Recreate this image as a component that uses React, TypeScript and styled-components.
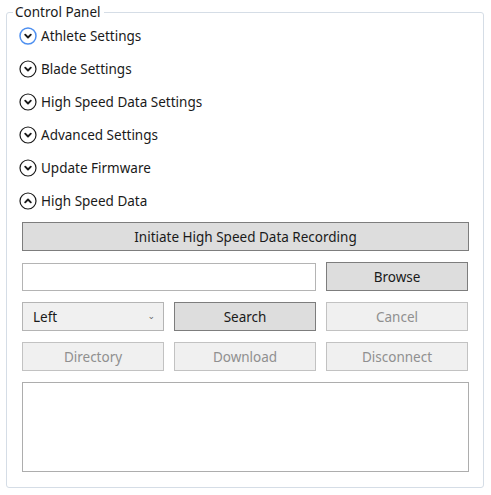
import React from "react";
import styled, { createGlobalStyle } from "styled-components";

const Global = createGlobalStyle`
  html, body { margin: 0; padding: 0; background: #ffffff; }
  body { font-family: "Noto Sans", "DejaVu Sans", sans-serif; color: #1a1a1a; }
`;

const Page = styled.div`
  width: 491px;
  height: 495px;
  box-sizing: border-box;
  padding: 4px 7px 0 6px;
`;

const Fieldset = styled.fieldset`
  margin: 0;
  box-sizing: border-box;
  height: 484px;
  border: 1px solid #d5dde6;
  border-radius: 3px;
  padding: 0 14px 0 12px;
  display: flex;
  flex-direction: column;
`;

const Legend = styled.legend`
  font-size: 13.5px;
  line-height: 16px;
  padding: 0 3px 0 2px;
  margin-left: -6px;
`;

const Section = styled.div`
  height: 33px;
  display: flex;
  align-items: center;
  gap: 4px;
  font-size: 13.5px;
  &:first-of-type { margin-top: -1px; }
`;

const IconWrap = styled.span`
  width: 18px;
  height: 18px;
  display: inline-flex;
  align-items: center;
  justify-content: center;
`;

const Body = styled.div`
  display: flex;
  flex-direction: column;
  gap: 11px;
  padding-left: 3px;
  margin-top: 5px;
`;

const Grid = styled.div`
  display: grid;
  grid-template-columns: 142px 142px 142px;
  column-gap: 10px;
  row-gap: 11px;
`;

const Button = styled.button<{ $disabled?: boolean }>`
  height: 29px;
  box-sizing: border-box;
  border: 1px solid ${(p) => (p.$disabled ? "#c2c2c2" : "#7d7d7d")};
  background: ${(p) => (p.$disabled ? "#f0f0f0" : "#dddddd")};
  color: ${(p) => (p.$disabled ? "#8f8f8f" : "#1a1a1a")};
  font-family: inherit;
  font-size: 13.5px;
  padding: 0;
  margin: 0;
  border-radius: 0;
`;

const WideButton = styled(Button)`
  width: 100%;
`;

const TextInput = styled.div`
  grid-column: span 2;
  height: 28px;
  margin-top: 1px;
  box-sizing: border-box;
  border: 1px solid #b4b4b4;
  background: #ffffff;
`;

const Combo = styled.div`
  height: 29px;
  box-sizing: border-box;
  border: 1px solid #b4b4b4;
  background: #f0f0f0;
  display: flex;
  align-items: center;
  justify-content: space-between;
  padding: 0 8px 0 10px;
  font-size: 13.5px;
`;

const Caret = styled.span`
  font-size: 9px;
  color: #666;
  margin-top: -2px;
`;

const TextArea = styled.div`
  height: 90px;
  box-sizing: border-box;
  border: 1px solid #adadad;
  background: #ffffff;
`;

const Chevron = ({ up, focus }: { up?: boolean; focus?: boolean }) => (
  <svg width="18" height="18" viewBox="0 0 18 18">
    <circle
      cx="9"
      cy="9"
      r="8"
      fill="none"
      stroke={focus ? "#4d8ff0" : "#1a1a1a"}
      strokeWidth={focus ? 1.5 : 1.2}
    />
    <path
      d={up ? "M6.2 10.3 L9 7.5 L11.8 10.3" : "M6.2 7.7 L9 10.5 L11.8 7.7"}
      fill="none"
      stroke="#1a1a1a"
      strokeWidth="1.9"
      strokeLinecap="round"
      strokeLinejoin="round"
    />
  </svg>
);

const sections = [
  "Athlete Settings",
  "Blade Settings",
  "High Speed Data Settings",
  "Advanced Settings",
  "Update Firmware",
];

export default function App() {
  return (
    <Page>
      <Global />
      <Fieldset>
        <Legend>Control Panel</Legend>
        {sections.map((s, i) => (
          <Section key={s}>
            <IconWrap>
              <Chevron focus={i === 0} />
            </IconWrap>
            {s}
          </Section>
        ))}
        <Section>
          <IconWrap>
            <Chevron up />
          </IconWrap>
          High Speed Data
        </Section>
        <Body>
          <WideButton>Initiate High Speed Data Recording</WideButton>
          <Grid>
            <TextInput />
            <Button>Browse</Button>
            <Combo>
              Left<Caret>⌄</Caret>
            </Combo>
            <Button>Search</Button>
            <Button $disabled>Cancel</Button>
            <Button $disabled>Directory</Button>
            <Button $disabled>Download</Button>
            <Button $disabled>Disconnect</Button>
          </Grid>
          <TextArea />
        </Body>
      </Fieldset>
    </Page>
  );
}
